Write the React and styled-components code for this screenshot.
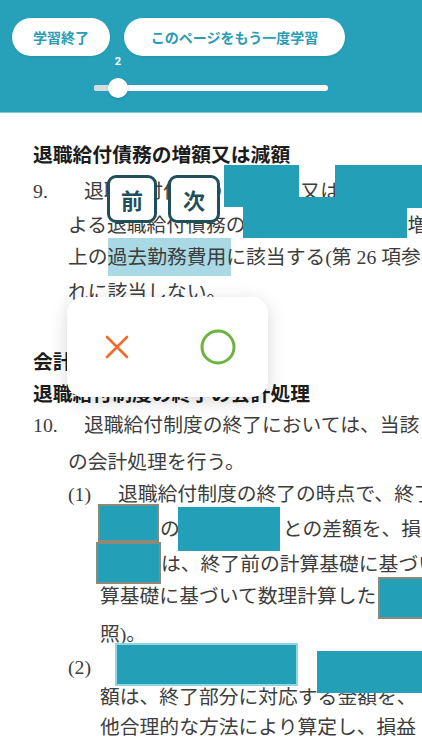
import React from "react";
import styled, { createGlobalStyle } from "styled-components";

const Global = createGlobalStyle`
  html, body { margin: 0; padding: 0; background: #fff; }
  body { overflow: hidden; }
`;

const Page = styled.div`
  position: relative;
  width: 422px;
  height: 750px;
  overflow: hidden;
  background: #fff;
`;

const Header = styled.header`
  height: 113px;
  box-sizing: border-box;
  background: #26a1b9;
  border-bottom: 1px solid #7ccbd9;
  padding: 18px 12px 0;
`;

const ButtonRow = styled.div`
  display: flex;
  gap: 14px;
`;

const PillButton = styled.button`
  width: ${(p) => p.$w}px;
  height: 38px;
  border: none;
  border-radius: 19px;
  background: #fff;
  color: #2a9cb3;
  font-family: "Noto Sans CJK JP", sans-serif;
  font-size: 14px;
  font-weight: 700;
  padding: 0;
  box-shadow: 0 1px 2px rgba(0, 0, 0, 0.08);
`;

const SliderWrap = styled.div`
  position: relative;
  width: 234px;
  height: 6px;
  margin: 29px auto 0;
  border-radius: 3px;
  background: #fff;
`;

const SliderFill = styled.div`
  height: 100%;
  border-radius: 3px 0 0 3px;
  background: #d6dcde;
`;

const Thumb = styled.div`
  position: absolute;
  top: 50%;
  width: 20px;
  height: 20px;
  margin: -10px 0 0 -10px;
  border-radius: 50%;
  background: #fff;
  box-shadow: 0 1px 3px rgba(0, 0, 0, 0.2);
`;

const ThumbLabel = styled.span`
  position: absolute;
  left: 50%;
  top: -23px;
  transform: translateX(-50%);
  color: #fff;
  font-family: Roboto, sans-serif;
  font-size: 11px;
  font-weight: 700;
`;

const Doc = styled.div`
  padding: 31px 0 0 33px;
  font-family: "Liberation Serif", "Noto Sans CJK JP", serif;
  font-size: 19.8px;
  color: #3d3d3d;
`;

const Line = styled.div`
  height: 20px;
  line-height: 20px;
  white-space: nowrap;
  margin-top: ${(p) => (p.$gap ?? 14)}px;
  padding-left: ${(p) => p.$indent || 0}px;
`;

const Heading = styled(Line)`
  font-family: "Noto Sans CJK JP", sans-serif;
  font-weight: 700;
  color: #1c1c1c;
`;

const Num = styled.span`
  display: inline-block;
  width: ${(p) => p.$w}px;
`;

const Gap = styled.span`
  display: inline-block;
  width: ${(p) => p.$w}px;
`;

const Mark = styled.span`
  background: #a9d9e4;
  padding: 8px 5px 8px 0;
  margin-right: -5px;
`;

const Mask = styled.div`
  position: absolute;
  left: ${(p) => p.$x}px;
  top: ${(p) => p.$y}px;
  width: ${(p) => p.$w}px;
  height: ${(p) => p.$h}px;
  box-sizing: border-box;
  background: #23a0b8;
  border: ${(p) => (p.$b ? `2px solid ${p.$b}` : "none")};
`;

const NavKey = styled.button`
  position: absolute;
  left: ${(p) => p.$x}px;
  top: 175px;
  width: ${(p) => p.$w}px;
  height: 48px;
  box-sizing: border-box;
  border: 3px solid #1f4f5b;
  border-radius: 9px;
  background: #fff;
  color: #1f4f5b;
  font-family: "Noto Sans CJK JP", sans-serif;
  font-size: 22px;
  font-weight: 700;
  padding: 0;
  display: flex;
  align-items: center;
  justify-content: center;
`;

const Judge = styled.div`
  position: absolute;
  left: 67px;
  top: 297px;
  width: 201px;
  height: 100px;
  border-radius: 16px;
  background: #fff;
  box-shadow: 0 4px 18px rgba(0, 0, 0, 0.16);
  display: flex;
  align-items: center;
  justify-content: space-around;
`;

const JudgeButton = styled.button`
  width: 40px;
  height: 40px;
  border: none;
  background: none;
  padding: 0;
  display: flex;
  align-items: center;
  justify-content: center;
`;

const masks = [
  { x: 224, y: 165, w: 75, h: 42 },
  { x: 335, y: 165, w: 90, h: 43 },
  { x: 243, y: 197, w: 164, h: 41 },
  { x: 98, y: 504, w: 61, h: 38, b: "#8b8a79" },
  { x: 96, y: 542, w: 65, h: 42, b: "#8b8a79" },
  { x: 178, y: 507, w: 102, h: 44 },
  { x: 378, y: 577, w: 50, h: 42, b: "#8b8a79" },
  { x: 115, y: 643, w: 183, h: 43, b: "#8fd6e3" },
  { x: 317, y: 651, w: 110, h: 42 },
];

export default function App() {
  return (
    <Page>
      <Global />
      <Header>
        <ButtonRow>
          <PillButton $w={98}>学習終了</PillButton>
          <PillButton $w={221}>このページをもう一度学習</PillButton>
        </ButtonRow>
        <SliderWrap>
          <SliderFill style={{ width: "24px" }} />
          <Thumb style={{ left: "24px" }}>
            <ThumbLabel>2</ThumbLabel>
          </Thumb>
        </SliderWrap>
      </Header>

      <Doc>
        <Heading $gap={0}>退職給付債務の増額又は減額</Heading>
        <Line $gap={17}>
          <Num $w={51}>9.</Num>退職給付債務の<Gap $w={78} />又は
        </Line>
        <Line $indent={35}>
          よる退職給付債務の<Gap $w={162} />増
        </Line>
        <Line $gap={12} $indent={35}>
          上の<Mark>過去勤務費用</Mark>に該当する(第 26 項参照)
        </Line>
        <Line $gap={15} $indent={35}>
          れに該当しない。
        </Line>
        <Heading $gap={49}>会計処理</Heading>
        <Heading $gap={12}>退職給付制度の終了の会計処理</Heading>
        <Line $gap={12}>
          <Num $w={51}>10.</Num>退職給付制度の終了においては、当該
        </Line>
        <Line $gap={17} $indent={35}>
          の会計処理を行う。
        </Line>
        <Line $gap={12} $indent={35}>
          <Num $w={50}>(1)</Num>退職給付制度の終了の時点で、終了
        </Line>
        <Line $gap={15} $indent={67}>
          <Gap $w={60} />の<Gap $w={103} />との差額を、損益
        </Line>
        <Line $gap={15} $indent={67}>
          <Gap $w={61} />は、終了前の計算基礎に基づいて
        </Line>
        <Line $gap={12} $indent={67}>
          算基礎に基づいて数理計算した
        </Line>
        <Line $gap={18} $indent={67}>
          照)。
        </Line>
        <Line $gap={13} $indent={35}>
          <Num $w={197}>(2)</Num>、
        </Line>
        <Line $gap={10} $indent={67}>
          額は、終了部分に対応する金額を、
        </Line>
        <Line $gap={10} $indent={67}>
          他合理的な方法により算定し、損益
        </Line>
      </Doc>

      {masks.map((m, i) => (
        <Mask key={i} $x={m.x} $y={m.y} $w={m.w} $h={m.h} $b={m.b} />
      ))}

      <NavKey $x={107} $w={50}>前</NavKey>
      <NavKey $x={168} $w={52}>次</NavKey>

      <Judge>
        <JudgeButton aria-label="不正解">
          <svg width="24" height="24" viewBox="0 0 24 24">
            <path d="M2 2 L22 22 M22 2 L2 22" stroke="#f26b2a" strokeWidth="2.6" strokeLinecap="round" />
          </svg>
        </JudgeButton>
        <JudgeButton aria-label="正解">
          <svg width="36" height="36" viewBox="0 0 36 36">
            <circle cx="18" cy="18" r="16" fill="none" stroke="#6db33f" strokeWidth="3" />
          </svg>
        </JudgeButton>
      </Judge>
    </Page>
  );
}
